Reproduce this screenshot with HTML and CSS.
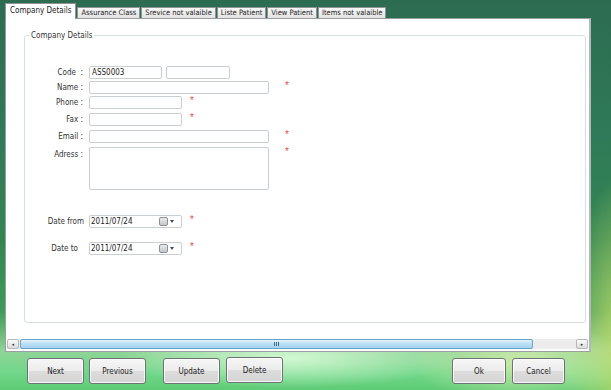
FILE: index.html
```html
<!DOCTYPE html>
<html lang="en">
<head>
    <meta charset="UTF-8">
    <title>Company Details</title>
    <link rel="stylesheet" href="styles.css">
</head>
<body>
    <div class="window">
        <div class="tabs">
            <div class="tab active">Company Details</div>
            <div class="tab">Assurance Class</div>
            <div class="tab">Srevice not valaible</div>
            <div class="tab">Liste Patient</div>
            <div class="tab">View Patient</div>
            <div class="tab">Items not valaible</div>
        </div>

        <div class="panel">
            <div class="group">
                <div class="group-title">Company Details</div>

                <div class="row">
                    <label class="lbl">Code&nbsp; :</label>
                    <input class="field code" type="text" value="ASS0003">
                    <input class="field code2" type="text">
                </div>
                <div class="row r-name">
                    <label class="lbl">Name :</label>
                    <input class="field wide" type="text">
                    <span class="req far">*</span>
                </div>
                <div class="row r-phone">
                    <label class="lbl">Phone :</label>
                    <input class="field narrow" type="text">
                    <span class="req">*</span>
                </div>
                <div class="row r-fax">
                    <label class="lbl">Fax :</label>
                    <input class="field narrow" type="text">
                    <span class="req">*</span>
                </div>
                <div class="row r-email">
                    <label class="lbl">Email :</label>
                    <input class="field wide" type="text">
                    <span class="req far">*</span>
                </div>
                <div class="row r-adress">
                    <label class="lbl">Adress :</label>
                    <textarea class="field wide area"></textarea>
                    <span class="req far">*</span>
                </div>

                <div class="row r-from">
                    <label class="lbl date-lbl">Date from</label>
                    <div class="field narrow date">
                        <span>2011/07/24</span>
                        <span class="cal"></span>
                        <span class="drop"></span>
                    </div>
                    <span class="req">*</span>
                </div>
                <div class="row r-to">
                    <label class="lbl date-lbl to">Date to</label>
                    <div class="field narrow date">
                        <span>2011/07/24</span>
                        <span class="cal"></span>
                        <span class="drop"></span>
                    </div>
                    <span class="req">*</span>
                </div>
            </div>

            <div class="hscroll">
                <div class="sb-btn">&#9666;</div>
                <div class="sb-thumb"><span class="grip"></span></div>
                <div class="sb-track"></div>
                <div class="sb-btn">&#9656;</div>
            </div>
        </div>

        <div class="footer">
            <button class="btn">Next</button>
            <button class="btn b-prev">Previous</button>
            <button class="btn b-update">Update</button>
            <button class="btn b-delete">Delete</button>
            <button class="btn b-ok">Ok</button>
            <button class="btn b-cancel">Cancel</button>
        </div>
    </div>
</body>
</html>
```

FILE: styles.css
```css
html, body {
    margin: 0;
    padding: 0;
}

body {
    width: 611px;
    height: 390px;
    overflow: hidden;
    font-family: "DejaVu Sans Condensed", "DejaVu Sans", sans-serif;
    font-size: 8px;
    color: #2a2a2a;
    background:
        radial-gradient(ellipse 170px 30px at 290px 358px, rgba(214, 250, 214, 0.95), rgba(214, 250, 214, 0)),
        radial-gradient(ellipse 110px 40px at 520px 362px, rgba(212, 236, 170, 0.9), rgba(212, 236, 170, 0)),
        radial-gradient(ellipse 60px 170px at 625px 345px, #bcd86a, rgba(160, 200, 80, 0)),
        linear-gradient(to bottom, #2d6c51 0%, #2f7a58 35%, #338652 62%, #3f9a58 80%, #8fd497 90%, #6fd689 96%, #5ecb76 100%);
}

.window {
    padding: 3px 20px 0 5px;
}

/* tabs */
.tabs {
    display: flex;
    align-items: flex-end;
    height: 15px;
    gap: 1px;
}

.tab {
    height: 10px;
    line-height: 10px;
    padding: 0 3px;
    background: linear-gradient(#f7f7f7, #e3e3e3);
    border: 1px solid #8f9396;
    border-bottom: none;
    color: #222;
    font-size: 7.5px;
    white-space: nowrap;
}

.tab.active {
    height: 15px;
    line-height: 14px;
    padding: 0 4px;
    background: #fff;
    font-size: 8px;
    position: relative;
    margin-bottom: -1px;
    z-index: 1;
}

/* white page */
.panel {
    background: #fff;
    border: 1px solid #9a9ea2;
    border-right: 2px solid #b4b7ba;
    padding: 0 1px 2px 1px;
}

.group {
    position: relative;
    margin: 16px 2px 0 17px;
    border: 1px solid #d6dfe5;
    border-radius: 3px;
    padding-top: 30px;
    height: 256px;
}

.group-title {
    position: absolute;
    top: -6px;
    left: 4px;
    padding: 0 2px;
    background: #fff;
    line-height: 11px;
    color: #333;
}

.row {
    display: flex;
    align-items: center;
    height: 13px;
}

.r-name, .r-phone {
    margin-top: 2px;
}

.r-fax, .r-email, .r-adress {
    margin-top: 4px;
}

.r-adress {
    height: 43px;
    align-items: flex-start;
}

.r-from {
    margin-top: 25px;
}

.r-to {
    margin-top: 14px;
}

.lbl {
    width: 58px;
    margin-right: 6px;
    text-align: right;
    color: #333;
    white-space: nowrap;
}

.r-adress .lbl {
    padding-top: 3px;
}

.date-lbl {
    width: 59px;
    margin-right: 5px;
}

.date-lbl.to {
    width: 53px;
    margin-right: 11px;
}

.field {
    box-sizing: border-box;
    height: 13px;
    margin: 0;
    padding: 0 2px;
    border: 1px solid #c9ced3;
    border-radius: 2px;
    background: #fff;
    font: inherit;
    color: #222;
    outline: none;
}

.code {
    width: 73px;
}

.code2 {
    width: 64px;
    margin-left: 4px;
}

.wide {
    width: 180px;
}

.narrow {
    width: 93px;
}

.area {
    height: 43px;
    resize: none;
}

.req {
    align-self: flex-start;
    color: #ec4b4b;
    font-size: 10px;
    line-height: 10px;
    margin-left: 8px;
    font-family: "Liberation Sans", sans-serif;
}

.req.far {
    margin-left: 16px;
}

.date {
    display: flex;
    align-items: center;
    padding-left: 1px;
    line-height: 11px;
}

.date span:first-child {
    flex: 1;
}

.cal {
    width: 7px;
    height: 7px;
    border: 1px solid #8c9196;
    border-radius: 2px;
    background: linear-gradient(#e9ebed, #c3c7cb);
}

.drop {
    width: 0;
    height: 0;
    margin: 0 5px 0 2px;
    border-left: 2px solid transparent;
    border-right: 2px solid transparent;
    border-top: 3px solid #3b4a66;
}

/* horizontal scrollbar */
.hscroll {
    display: flex;
    height: 10px;
    margin-top: 16px;
    background: #ececec;
}

.sb-btn {
    width: 10px;
    height: 8px;
    border: 1px solid #b5b9bd;
    border-radius: 2px;
    background: linear-gradient(#fbfbfb, #dcdcdc);
    font-size: 5px;
    line-height: 8px;
    text-align: center;
    color: #333;
}

.sb-thumb {
    width: 511px;
    height: 8px;
    margin-left: 1px;
    border: 1px solid #6ba3cc;
    border-radius: 2px;
    background: linear-gradient(#e3f2fb, #b9def4 50%, #a5d2ee);
    display: flex;
    justify-content: center;
    align-items: center;
}

.grip {
    width: 5px;
    height: 4px;
    background: repeating-linear-gradient(to right, #3f6a8a 0 1px, transparent 1px 2px);
}

.sb-track {
    flex: 1;
}

/* buttons */
.footer {
    display: flex;
    align-items: flex-start;
    padding: 6px 0 0 22px;
}

.btn {
    box-sizing: border-box;
    width: 57px;
    height: 26px;
    margin: 0;
    padding: 0;
    border: 1px solid #6f7275;
    border-radius: 3px;
    background: linear-gradient(#f6f6f6 0%, #ececec 48%, #dcdcdc 52%, #d4d4d4 100%);
    box-shadow: inset 0 0 0 1px rgba(255, 255, 255, 0.8);
    font: inherit;
    color: #222;
}

.b-prev {
    margin-left: 5px;
}

.b-update {
    margin-left: 17px;
}

.b-delete {
    margin-left: 6px;
    margin-top: -1px;
}

.b-ok {
    width: 54px;
    margin-left: 169px;
}

.b-cancel {
    width: 53px;
    margin-left: 6px;
}
```
